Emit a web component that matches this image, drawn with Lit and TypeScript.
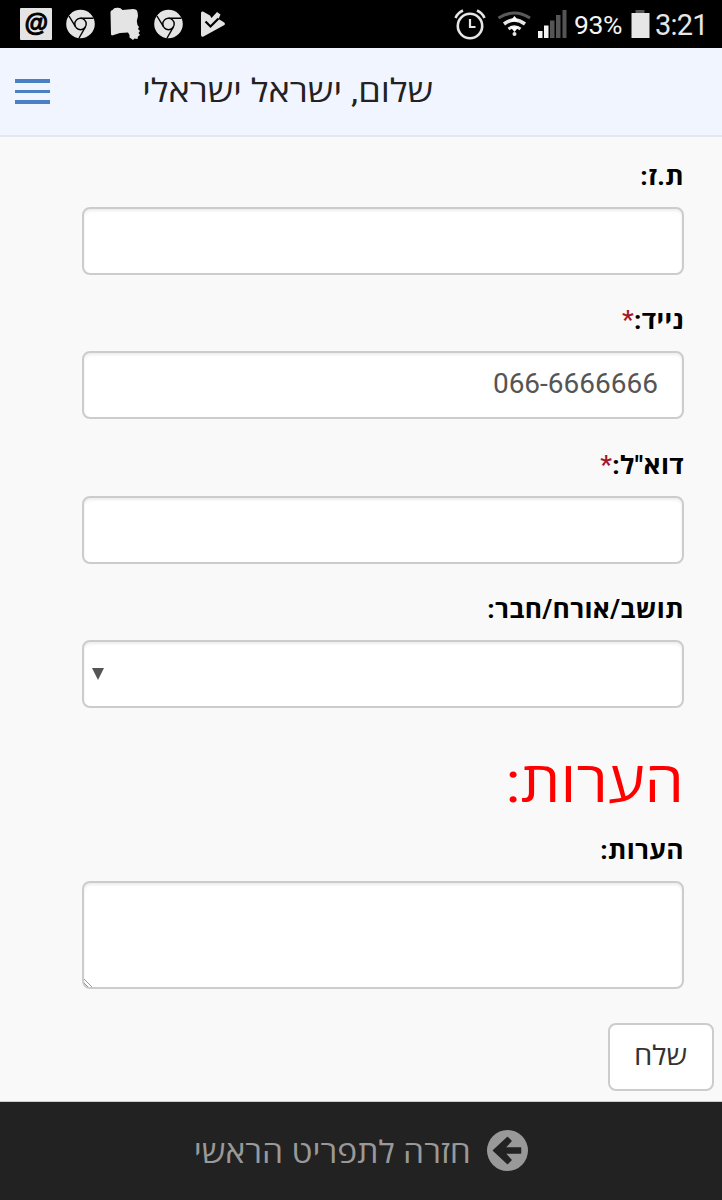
import { LitElement, html, css, nothing } from "lit";
import { customElement, property } from "lit/decorators.js";

const chromeIcon = html`<svg class="chrome" width="30" height="30" viewBox="0 0 30 30">
  <circle cx="14.500" cy="15" r="14.3" fill="#e4e4e4" />
  <g fill="none" stroke="#000" stroke-width="1.4">
    <circle cx="14.500" cy="15" r="5.7" />
    <path d="M14.500 9.300H27.500M9.600 17.900L3 7M19.400 17.900L13.100 29" />
  </g>
</svg>`;

@customElement("status-bar")
export class StatusBar extends LitElement {
  static styles = css`
    :host { display: flex; height: 48px; background: #000; color: #e6e6e6; direction: ltr; align-items: center; justify-content: space-between; font-family: Roboto, sans-serif; }
    .left { display: flex; align-items: center; padding-left: 20px; }
    .left svg, .right svg { display: block; flex: none; }
    .mail { margin-right: 14px; }
    .chrome { margin-right: 14px; }
    .right { display: flex; align-items: center; padding-right: 15px; }
    .pct { font-size: 26.5px; line-height: 48px; width: 57px; padding-top: 2px; color: #f4f4f4; letter-spacing: -0.4px; white-space: nowrap; }
    .time { font-size: 29px; line-height: 48px; padding: 2px 0 0 1px; width: 52px; letter-spacing: -0.8px; white-space: nowrap; }
  `;
  render() {
    return html`
      <div class="left">
        <svg class="mail" width="32" height="32" viewBox="0 0 32 32">
          <rect width="32" height="32" rx="1" fill="#e4e4e4" />
          <text x="16" y="23" text-anchor="middle" font-family="Liberation Sans" font-size="24" font-weight="700" font-style="italic" stroke="#000" stroke-width="1">@</text>
        </svg>
        ${chromeIcon}
        <svg width="34" height="34" viewBox="0 0 34 34">
          <path fill="#e4e4e4" d="M.5 5Q.5 3.500 2.500 3Q4 .5 7.500 .8Q10.500 .5 12.500 3L23 2Q27 2 27.500 5L28 9L26.800 14L27.500 18L29 20L28 22L30 24L28.500 26L30 28L28 29.500L27.500 32L24.500 31.500L23 33L21 31.500L19.500 30.500L19.500 28L18 25.500L10 26L2 28.500L1 27.500Z" />
        </svg>
        <svg width="10" height="2"></svg>
        ${chromeIcon}
        <svg width="30" height="30" viewBox="0 0 30 30">
          <path fill="#e4e4e4" d="M3 4Q3 2 5 2.500L12 6.500L13.500 9L19 3L22.500 5.500L20.500 10L25.500 13Q28.500 15 25.500 16.500L5.500 27.500Q3 28.500 3 26Z" />
          <path d="M7.500 12.500L12.500 17.500L20.500 9.500" fill="none" stroke="#000" stroke-width="2.200" />
        </svg>
      </div>
      <div class="right">
        <svg width="120" height="34" viewBox="0 0 120 34">
          <g fill="none" stroke="#e6e6e6">
            <circle cx="16" cy="19" r="12.200" stroke-width="2.600" />
            <path d="M16 12V20H21.500" stroke-width="2.200" />
            <path d="M1.500 11Q3.500 6 9 3.500M23 3.500Q28.500 6 30.500 11" stroke-width="2.500" />
          </g>
          <g fill="none">
            <path d="M44.500 11Q60.500 1 76 11" stroke="#5a5a5a" stroke-width="3" />
            <path d="M50 17Q60.500 9 71 17" stroke="#e6e6e6" stroke-width="3.500" />
            <path d="M54.500 22Q60.500 17.500 66.500 22" stroke="#e6e6e6" stroke-width="3" />
          </g>
          <path fill="#fff" d="M60.500 9L65 14.500H56ZM56 19.500H65L60.500 25Z" />
          <circle cx="60.500" cy="27" r="2" fill="#e6e6e6" />
          <path fill="#f4f4f4" d="M84 24H88.500V31H84ZM90 18.500H94.500V31H90Z" />
          <path fill="#555" d="M96 13.500H100.500V31H96ZM102 8H106.500V31H102ZM108.500 3H112.500V31H108.500Z" />
        </svg>
        <span class="pct">93%</span>
        <svg width="23" height="28" viewBox="0 0 23 28"><path fill="#555" d="M4.500 0H13.500V3H4.500Z" /><path fill="#e6e6e6" d="M.5 3H18.500V28H.5Z" /></svg>
        <span class="time">3:21</span>
      </div>`;
  }
}

@customElement("form-field")
export class FormField extends LitElement {
  @property() label = "";
  @property() value = "";
  @property() kind = "text";
  @property({ type: Boolean }) required = false;
  static styles = css`
    :host { display: block; direction: rtl; font-family: Roboto, "Open Sans", sans-serif; }
    * { box-sizing: border-box; }
    .label { display: block; height: 38px; line-height: 38px; font-size: 25px; letter-spacing: .3px; font-weight: 700; color: #000; white-space: nowrap; transform: scaleX(1.055); transform-origin: right; padding-top: 1px; }
    .star { color: #a5182a; font-weight: 500; }
    .wrap { position: relative; width: 602px; margin-top: 12px; display: flex; }
    .box { appearance: none; display: block; width: 602px; height: 68px; margin: 0; border: 2px solid #ccc; border-radius: 8px; background: #fff; box-shadow: inset 0 2px 3px rgba(0,0,0,.075); padding: 0 24px 4px; font: 28px Roboto, sans-serif; color: #555; outline: 0; }
    .area { height: 108px; resize: none; }
    .mark { position: absolute; left: 10px; top: 28px; }
    .grip { position: absolute; left: 2px; bottom: 2px; }
  `;
  render() {
    const box =
      this.kind === "select"
        ? html`<select class="box"></select><svg class="mark" width="12" height="13"><path d="M0 0H12L6 12Z" fill="#555" /></svg>`
        : this.kind === "area"
        ? html`<textarea class="box area"></textarea><svg class="grip" width="9" height="9"><path d="M0 1L8 9M0 5L4 9" stroke="#999" stroke-width="1" /></svg>`
        : html`<input class="box" .value=${this.value} />`;
    return html`<label class="label">${this.label}${this.required ? html`<span class="star">*</span>` : nothing}</label>
      <div class="wrap">${box}</div>`;
  }
}

@customElement("app-root")
export class AppRoot extends LitElement {
  static styles = css`
    :host { display: flex; flex-direction: column; width: 722px; height: 1200px; background: #f9f9f9; direction: rtl; font-family: Roboto, "Open Sans", sans-serif; overflow: hidden; }
    * { box-sizing: border-box; }
    .top { height: 89px; flex: none; background: #f0f5ff; border-bottom: 2px solid #e4e7ec; display: flex; direction: ltr; align-items: center; }
    .burger { margin: 0 0 0 15px; display: block; flex: none; }
    .title { flex: none; width: 383px; text-align: right; direction: rtl; font-size: 32px; line-height: 50px; padding-bottom: 2px; color: #222; white-space: nowrap; transform: scaleX(1.13); transform-origin: right; }
    .form { height: 964px; flex: none; padding: 20px 38px 0 0; display: flex; flex-direction: column; }
    .field { height: 144.400px; flex: none; }
    .heading { margin: 0; height: 96px; flex: none; line-height: 95px; font-size: 57px; font-weight: 400; color: red; transform: scaleX(1.1); transform-origin: right; }
    .notes { height: 192px; flex: none; }
    .send { flex: none; width: 106px; height: 68px; margin: 0 -30px 0 0; padding: 0 0 4px; border: 2px solid #ccc; border-radius: 8px; background: #fff; color: #333; font: 27px Roboto, "Open Sans", sans-serif; }
    .send span { display: inline-block; transform: scaleX(1.08); }
    .foot { height: 99px; flex: none; background: #222; border-top: 1px solid #ccc; display: flex; align-items: center; justify-content: flex-start; padding: 0 194px 1px 0; gap: 16px; color: #999; font-size: 30.5px; white-space: nowrap; }
    .foot svg { flex: none; }
    .foot span { transform: scaleX(1.1); transform-origin: right; }
  `;
  render() {
    return html`
      <status-bar></status-bar>
      <header class="top">
        <svg class="burger" width="35" height="26" viewBox="0 0 35 26"><path fill="#4b80c2" d="M0 0H35V4H0ZM0 11H35V14H0ZM0 21H35V25H0Z" /></svg>
        <div class="title">שלום, ישראל ישראלי</div>
      </header>
      <main class="form">
        <form-field class="field" label="ת.ז:"></form-field>
        <form-field class="field" label="נייד:" required value="066-6666666"></form-field>
        <form-field class="field" label="דוא&quot;ל:" required></form-field>
        <form-field class="field" label="תושב/אורח/חבר:" kind="select"></form-field>
        <h2 class="heading">הערות:</h2>
        <form-field class="notes" label="הערות:" kind="area"></form-field>
        <button class="send"><span>שלח</span></button>
      </main>
      <footer class="foot">
        <svg width="41" height="41" viewBox="0 0 41 41"><circle cx="20.500" cy="20.500" r="20.500" fill="#999" /><path fill="#222" stroke="#222" stroke-width="1.500" stroke-linejoin="round" d="M6.500 20.500L20.500 7.500L24 11L17.500 18H33.500V23H17.500L24 30L20.500 33.500Z" /></svg>
        <span>חזרה לתפריט הראשי</span>
      </footer>`;
  }
}
